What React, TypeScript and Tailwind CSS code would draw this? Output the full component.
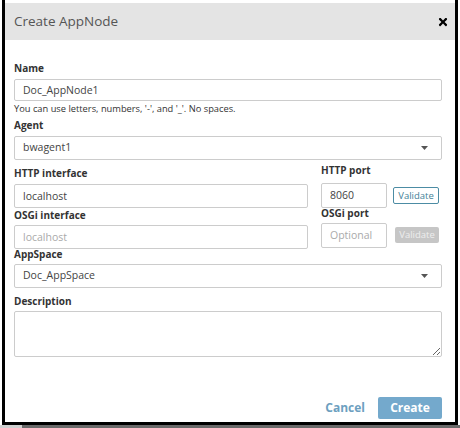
import { FaTimes } from 'react-icons/fa';

const font = { fontFamily: '"Open Sans", "Noto Sans", Arial, sans-serif' };

function Label({ text, className = '' }: { text: string; className?: string }) {
  return (
    <div className={`h-[14px] text-[10px] leading-[14px] font-bold text-[#333] ${className}`}>
      {text}
    </div>
  );
}

function Select({ value, className = '' }: { value: string; className?: string }) {
  return (
    <div
      className={`flex items-center justify-between h-[24px] border border-[#ccc] rounded-[2px] bg-white pl-[8px] pr-[13px] text-[10.5px] text-[#444] ${className}`}
    >
      <span>{value}</span>
      <svg width="7" height="4" viewBox="0 0 7 4">
        <path d="M0 0 L7 0 L3.5 4 Z" fill="#555" />
      </svg>
    </div>
  );
}

function PortRow({ value, placeholder, disabled }: { value?: string; placeholder?: string; disabled?: boolean }) {
  return (
    <div className="flex items-center h-[24px]">
      <input
        readOnly
        value={value ?? ''}
        placeholder={placeholder}
        className="w-[66px] h-[25px] border border-[#ccc] rounded-[2px] px-[8px] text-[10.5px] text-[#444] placeholder:text-[#aaa] outline-none"
      />
      {disabled ? (
        <div className="ml-[8px] w-[44px] h-[16px] rounded-[2px] bg-[#c6c6c6] text-[#eee] text-[9.5px] leading-[16px] text-center">
          Validate
        </div>
      ) : (
        <div className="ml-[6px] w-[46px] h-[17px] rounded-[2px] border border-[#4c8ca4] text-[#3f7f98] text-[9.5px] leading-[15px] text-center">
          Validate
        </div>
      )}
    </div>
  );
}

export default function App() {
  return (
    <div className="w-[460px] h-[428px] bg-white overflow-hidden" style={font}>
      <div className="ml-[2px] w-[456px] h-[425px] border-x-[3px] border-b-[3px] border-black flex flex-col">
        <div className="h-[3px] bg-white" />
        <div className="h-[37px] bg-[#e4e4e4] flex items-center justify-between pl-[9px] pr-[6px]">
          <span className="text-[13.5px] text-[#555]">Create AppNode</span>
          <FaTimes className="text-black w-[12px] h-[12px]" />
        </div>

        <div className="flex-1 flex flex-col pl-[9px] pr-[13px]">
          <Label text="Name" className="mt-[21px]" />
          <input
            readOnly
            value="Doc_AppNode1"
            className="mt-[4px] h-[22px] border border-[#ccc] rounded-[2px] px-[8px] text-[10.5px] text-[#444] outline-none"
          />
          <div className="mt-[2px] text-[9.3px] leading-[12px] text-[#333]">
            You can use letters, numbers, '-', and '_'. No spaces.
          </div>

          <Label text="Agent" className="mt-[3px]" />
          <Select value="bwagent1" className="mt-[4px] h-[23px]" />

          <div className="flex items-start">
            <div className="w-[294px] flex flex-col">
              <Label text="HTTP interface" className="mt-[6px]" />
              <input
                readOnly
                value="localhost"
                className="mt-[4px] h-[24px] border border-[#ccc] rounded-[2px] px-[8px] text-[10.5px] text-[#444] outline-none"
              />
              <Label text="OSGi interface" />
              <input
                readOnly
                placeholder="localhost"
                className="mt-[3px] h-[24px] border border-[#ccc] rounded-[2px] px-[8px] text-[10.5px] text-[#444] placeholder:text-[#aaa] outline-none"
              />
            </div>
            <div className="ml-[13px] flex flex-col">
              <Label text="HTTP port" className="mt-[3px]" />
              <div className="mt-[6px]">
                <PortRow value="8060" />
              </div>
              <Label text="OSGi port" className="-mt-[1px]" />
              <div className="mt-[3px]">
                <PortRow placeholder="Optional" disabled />
              </div>
            </div>
          </div>

          <Label text="AppSpace" className="-mt-[2px]" />
          <Select value="Doc_AppSpace" className="mt-[3px]" />

          <Label text="Description" className="mt-[6px]" />
          <textarea
            readOnly
            className="mt-[3px] h-[46px] border border-[#ccc] rounded-[2px] px-[8px] text-[11px] outline-none"
          />

          <div className="mt-auto mb-[3px] flex items-center justify-end">
            <span className="text-[12px] font-bold text-[#6d9fc0] mr-[13px]">Cancel</span>
            <div className="w-[64px] h-[22px] rounded-[2px] bg-[#74a9cc] text-white text-[12px] font-bold flex items-center justify-center">
              Create
            </div>
          </div>
        </div>
      </div>
      <div className="flex h-[3px]">
        <div className="w-[22px] bg-[#cfcfcf]" />
        <div className="flex-1 bg-[#6a6a6a]" />
      </div>
    </div>
  );
}
